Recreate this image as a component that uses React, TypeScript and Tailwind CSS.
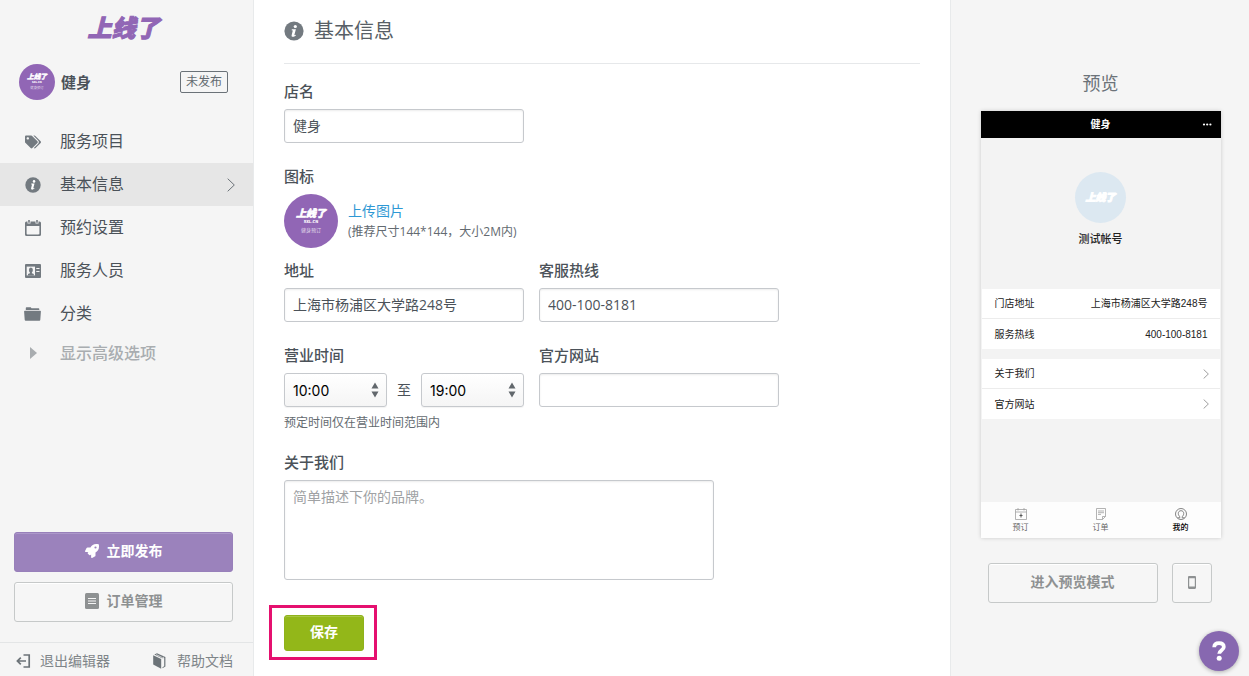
import type { ReactNode } from "react"
import { FaRocket, FaTags } from "react-icons/fa"

const times = ["09:00", "10:00", "11:00", "18:00", "19:00", "20:00"]

const inputClass =
  "h-[34px] w-full rounded-[3px] border border-[#c6c9cd] bg-white px-2 pb-[2px] text-sm text-[#4b5259] shadow-[inset_0_1px_2px_rgba(0,0,0,0.08)] outline-none"

const outlineButtonClass =
  "flex h-10 items-center justify-center rounded-[3px] border border-[#c6c9c9] bg-[#f6f6f6] pb-[2px] text-sm font-bold text-[#8e9192] shadow-[inset_0_1px_0_#fff]"

function InfoIcon({ className }: { className?: string }) {
  return (
    <svg viewBox="0 0 20 20" className={className} aria-hidden="true">
      <circle cx="10" cy="10" r="9.6" fill="currentColor" />
      <circle cx="11.3" cy="5.5" r="1.6" fill="#fff" />
      <path d="M7.9 8.2h4l-1.5 5.6c-.1.5.4.5 1.2 0l.3.6c-1.3 1.2-2.7 1.6-3.6 1.3-.8-.3-.8-1-.6-1.8L8.8 9.5l-1.2-.2z" fill="#fff" />
    </svg>
  )
}

function CalendarIcon() {
  return (
    <svg viewBox="0 0 16 16" className="h-4 w-4" fill="currentColor" aria-hidden="true">
      <path
        fillRule="evenodd"
        d="M1.500 1.500h1V3.500h3V1.500h5v2h3v-2h1A1.500 1.500 0 0 1 16 3v11.500a1.500 1.500 0 0 1-1.500 1.500h-13A1.500 1.500 0 0 1 0 14.500V3a1.500 1.500 0 0 1 1.500-1.500zM1.600 6v7.500c0 .5.400.9.900.9h11c.5 0 .9-.4.9-.9V6z"
      />
      <path d="M3.200 0h1.600v2.800H3.200zM11.200 0h1.600v2.800h-1.600z" />
    </svg>
  )
}

function IdCardIcon() {
  return (
    <svg viewBox="0 0 16 14" className="h-[14px] w-4" aria-hidden="true">
      <rect width="16" height="14" rx="1" fill="currentColor" />
      <rect x="1.700" y="2.600" width="8.300" height="8.800" fill="#f5f5f5" />
      <ellipse cx="5.900" cy="6" rx="2" ry="2.500" fill="currentColor" />
      <path d="M4.900 7.500h2v1.700l1.900.9v1.300H3v-1.300l1.900-.9z" fill="currentColor" />
      <path d="M11.300 4.500h3.200M11.300 7.500h3.200" stroke="#f5f5f5" strokeWidth="1.100" />
    </svg>
  )
}

function FolderIcon() {
  return (
    <svg viewBox="0 0 17 14" className="h-[14px] w-[17px]" fill="currentColor" aria-hidden="true">
      <path d="M1.800 3V1.200C1.800.5 2.200.2 2.800.2h3.400c.7 0 1 .5 1.300 1.100h6.800c.7 0 1 .3 1 1V3z" />
      <path d="M.8 3.800h15.400c.5 0 .8.3.7.8l-.6 8.200c0 .6-.4.9-.9.9H1.700c-.6 0-.9-.3-1-.9L.1 4.600c0-.5.2-.8.7-.8z" />
    </svg>
  )
}

function OrderIcon() {
  return (
    <svg viewBox="0 0 14 16" className="h-4 w-[14px]" aria-hidden="true">
      <rect width="14" height="16" rx="1.500" fill="currentColor" />
      <path d="M3 5.500h8M3 8h8M3 10.500h8" stroke="#f5f5f5" strokeWidth="1.200" />
    </svg>
  )
}

function ExitIcon() {
  return (
    <svg viewBox="0 0 15 14" className="h-[14px] w-[15px] text-[#6c7378]" fill="none" stroke="currentColor" strokeWidth="1.700" aria-hidden="true">
      <path d="M7.500 1h5.700v12H7.500M10 7H1.500M4.800 3.700 1.400 7l3.400 3.300" />
    </svg>
  )
}

function BookIcon() {
  return (
    <svg viewBox="0 0 13 16" className="h-4 w-[13px] text-[#6c7378]" fill="currentColor" aria-hidden="true">
      <path d="M.2 2.200 8.200 6v9.800L.2 11.600z" />
      <path d="M1.300 1.400 4 .2l8.400 3.700v9.700l-2.900 1.600v-1l1.700-.9V4.900L9 5.200z" />
      <path d="M3.200 1.600 9.500 4.700l1.500-.5" fill="none" stroke="#f5f5f5" strokeWidth=".7" />
    </svg>
  )
}

function Chevron({ className }: { className?: string }) {
  return (
    <svg viewBox="0 0 8 14" className={className} fill="none" stroke="currentColor" aria-hidden="true">
      <path d="M.7.7 7.300 7 .7 13.300" />
    </svg>
  )
}

function ShopAvatar({ className }: { className?: string }) {
  return (
    <svg viewBox="0 0 54 54" className={className} role="img" aria-label="健身">
      <circle cx="27" cy="27" r="27" fill="#9166b5" />
      <g fill="#fff" textAnchor="middle" fontFamily="'Noto Sans CJK SC', sans-serif">
        <text x="27" y="23" fontSize="10" fontWeight="900" fontStyle="italic" stroke="#fff" strokeWidth=".6">上线了</text>
        <text x="27" y="29" fontSize="4" fontWeight="900">SXL.CN</text>
        <text x="27" y="38" fontSize="5" opacity=".7">健身预订</text>
      </g>
    </svg>
  )
}

const navItems = [
  { label: "服务项目", icon: <FaTags className="h-4 w-4" /> },
  { label: "基本信息", icon: <InfoIcon className="h-4 w-4" />, active: true },
  { label: "预约设置", icon: <CalendarIcon /> },
  { label: "服务人员", icon: <IdCardIcon /> },
  { label: "分类", icon: <FolderIcon /> },
]

function Sidebar() {
  return (
    <aside className="flex w-[254px] shrink-0 flex-col border-r border-[#e8eaeb] bg-[#f5f5f5]">
      <div className="flex h-14 items-center justify-center pr-[6px] text-2xl font-black text-[#9166b5] italic [-webkit-text-stroke:1px_#9166b5]">
        上线了
      </div>

      <div className="flex items-center pt-2 pr-[25px] pl-[19px]">
        <ShopAvatar className="h-9 w-9" />
        <span className="ml-[6px] text-[15px] font-bold">健身</span>
        <span className="ml-auto rounded-[2px] border border-[#6b7278] px-[5px] text-xs leading-5 text-[#636a70]">未发布</span>
      </div>

      <nav className="mt-5">
        {navItems.map((item) => (
          <a
            key={item.label}
            href="#"
            className={`flex h-[43px] items-center pr-[18px] pl-6 text-base ${item.active ? "bg-[#e6e6e6]" : ""}`}
          >
            <span className="mr-[19px] flex w-[17px] justify-center text-[#737a80]">{item.icon}</span>
            <span className="pb-[2px]">{item.label}</span>
            {item.active && <Chevron className="ml-auto h-[14px] w-2 text-[#6b7278]" />}
          </a>
        ))}
        <a href="#" className="flex h-9 items-center pl-6 text-base font-medium text-[#a9adb0]">
          <span className="flex w-9 pl-[6px]">
            <svg viewBox="0 0 7 12" className="h-3 w-[7px]" fill="currentColor" aria-hidden="true">
              <path d="M0 0l7 6-7 6z" />
            </svg>
          </span>
          显示高级选项
        </a>
      </nav>

      <div className="mt-auto flex flex-col gap-[10px] pr-5 pb-5 pl-[14px]">
        <button className="flex h-10 items-center justify-center gap-2 rounded-[3px] border border-[#9880ba] bg-[#9b82bc] pb-[2px] text-sm font-bold text-white shadow-[inset_0_1px_0_#ad98ca]">
          <FaRocket className="h-[14px] w-[14px]" />
          立即发布
        </button>
        <button className={`${outlineButtonClass} gap-2`}>
          <OrderIcon />
          订单管理
        </button>
      </div>

      <div className="flex justify-between border-t border-[#e3e5e6] pt-2 pr-5 pb-[5px] pl-4 text-sm leading-5 text-[#7f8589]">
        <a href="#" className="flex items-center gap-[9px]">
          <ExitIcon />
          退出编辑器
        </a>
        <a href="#" className="flex items-center gap-[11px]">
          <BookIcon />
          帮助文档
        </a>
      </div>
    </aside>
  )
}

function Field({ id, label, children }: { id: string; label: string; children: ReactNode }) {
  return (
    <div>
      <label htmlFor={id} className="mb-2 block text-[15px] leading-5 font-medium">
        {label}
      </label>
      {children}
    </div>
  )
}

function TimeSelect({ id, label, value }: { id: string; label: string; value: string }) {
  return (
    <div className="relative w-[103px]">
      <select
        id={id}
        aria-label={label}
        defaultValue={value}
        className="h-[34px] w-full appearance-none rounded-[3px] border border-[#c6c9cd] bg-linear-to-b from-white to-[#f5f5f5] px-2 pt-[2px] font-[Inter,sans-serif] text-sm text-black shadow-[0_1px_1px_rgba(0,0,0,0.05)]"
      >
        {times.map((time) => (
          <option key={time}>{time}</option>
        ))}
      </select>
      <svg viewBox="0 0 8 16" className="pointer-events-none absolute top-[9px] right-2 h-4 w-2" fill="#62686d" aria-hidden="true">
        <path d="M4 .5 7.500 6.500H.5zM.5 9.500h7L4 15.500z" />
      </svg>
    </div>
  )
}

function BasicInfo() {
  return (
    <main className="min-w-0 flex-1 bg-white px-[30px] pt-[17px]">
      <h1 className="flex h-[47px] items-start gap-[10px] border-b border-[#e6e8ea] text-xl leading-7 text-[#585f66]">
        <span className="flex h-7 items-center text-[#737a80]">
          <InfoIcon className="h-5 w-5" />
        </span>
        基本信息
      </h1>

      <form className="flex flex-col gap-[23px] pt-[17px]" onSubmit={(e) => e.preventDefault()}>
        <div className="w-[240px]">
          <Field id="name" label="店名">
            <input id="name" className={inputClass} defaultValue="健身" />
          </Field>
        </div>

        <div className="-mb-[11px]">
          <div className="mb-2 text-[15px] leading-5 font-medium">图标</div>
          <div className="flex gap-[10px]">
            <ShopAvatar className="h-[54px] w-[54px]" />
            <div className="pt-[7px]">
              <a href="#" className="block text-sm leading-5 text-[#2e98d4]">上传图片</a>
              <p className="text-xs leading-[22px] text-[#636a70]">(推荐尺寸144*144，大小2M内)</p>
            </div>
          </div>
        </div>

        <div className="grid grid-cols-[240px_240px] gap-x-[15px] gap-y-[23px]">
          <Field id="address" label="地址">
            <input id="address" className={inputClass} defaultValue="上海市杨浦区大学路248号" />
          </Field>
          <Field id="hotline" label="客服热线">
            <input id="hotline" className={inputClass} defaultValue="400-100-8181" />
          </Field>
          <Field id="open" label="营业时间">
            <div className="flex items-center justify-between text-sm">
              <TimeSelect id="open" label="开始时间" value="10:00" />
              至
              <TimeSelect id="close" label="结束时间" value="19:00" />
            </div>
            <p className="mt-[6px] -mb-1 text-xs leading-5 text-[#636a70]">预定时间仅在营业时间范围内</p>
          </Field>
          <Field id="website" label="官方网站">
            <input id="website" className={inputClass} />
          </Field>
        </div>

        <div className="max-w-[430px]">
          <Field id="about" label="关于我们">
            <textarea
              id="about"
              placeholder="简单描述下你的品牌。"
              className="block h-[100px] w-full resize-none rounded-[3px] border border-[#c6c9cd] px-2 py-[6px] text-sm leading-5 shadow-[inset_0_1px_2px_rgba(0,0,0,0.08)] outline-none placeholder:text-[#a0a2a4]"
            />
          </Field>
        </div>

        <div className="mt-[2px] -ml-[15px] w-fit border-3 border-[#e5106f] pt-[7px] pr-[10px] pb-[6px] pl-3">
          <button className="block h-9 w-20 rounded-[3px] border border-[#8fb21b] bg-[#93b719] pb-[2px] text-sm font-bold text-white shadow-[inset_0_1px_0_#a8c644]">
            保存
          </button>
        </div>
      </form>
    </main>
  )
}

function PhoneRow({ label, value }: { label: string; value?: string }) {
  return (
    <div className="flex h-[30px] items-center bg-white pr-[11px] pl-[13px]">
      <span className="mr-auto">{label}</span>
      {value ? <span className="pr-px">{value}</span> : <Chevron className="h-[10px] w-[6px] text-[#777]" />}
    </div>
  )
}

function PhonePreview() {
  return (
    <div className="flex h-[427px] w-[240px] flex-col bg-[#f3f3f3] font-['Liberation_Sans','Noto_Sans_CJK_SC',sans-serif] text-[10px] text-[#222] shadow-[0_0_4px_rgba(0,0,0,0.18)]">
      <div className="grid h-[27px] grid-cols-3 items-center bg-black px-2 text-white">
        <span className="col-start-2 text-center font-bold">健身</span>
        <svg viewBox="0 0 10 3" className="h-[3px] w-[10px] justify-self-end" fill="#fff" aria-hidden="true">
          <circle cx="2" cy="1.500" r="1.100" />
          <circle cx="5.200" cy="1.500" r="1.100" />
          <circle cx="8.400" cy="1.500" r="1.100" />
        </svg>
      </div>

      <div className="flex h-[151px] flex-col items-center pt-[34px]">
        <div className="flex h-[51px] w-[51px] items-center justify-center rounded-full bg-[#dce8f1] text-[10px] font-black text-white italic [-webkit-text-stroke:1px_#fff]">
          上线了
        </div>
        <p className="mt-2 text-[11px] leading-4 font-medium">测试帐号</p>
      </div>

      <div className="divide-y divide-[#ececec] px-px">
        <PhoneRow label="门店地址" value="上海市杨浦区大学路248号" />
        <PhoneRow label="服务热线" value="400-100-8181" />
      </div>
      <div className="mt-[10px] divide-y divide-[#ececec] px-px">
        <PhoneRow label="关于我们" />
        <PhoneRow label="官方网站" />
      </div>

      <div className="mt-auto grid h-9 grid-cols-3 bg-[#fdfdfd] pt-[6px] text-[8px] leading-3 text-[#666]">
        <div className="flex flex-col items-center gap-[2px]">
          <svg viewBox="0 0 12 12" className="h-3 w-3" fill="none" stroke="#a0a0a0" strokeWidth=".8" aria-hidden="true">
            <path d="M.5 1.500h11v10H.5zM.5 4h11M3 0v2.500M9 0v2.500" />
            <path d="M6 5.500v4M4.500 7.500h3" stroke="#555" strokeWidth="1" />
          </svg>
          预订
        </div>
        <div className="flex flex-col items-center gap-[2px]">
          <svg viewBox="0 0 12 12" className="h-3 w-3" fill="none" stroke="#a0a0a0" strokeWidth=".8" aria-hidden="true">
            <path d="M1.500.5h9v8l-3 3h-6zM10.500 8.500h-3v3M3 3h6M3 4.700h6M3 6.400h3" />
          </svg>
          订单
        </div>
        <div className="flex flex-col items-center gap-[2px] font-medium text-black">
          <svg viewBox="0 0 12 12" className="h-3 w-3" fill="none" stroke="#777" strokeWidth=".9" aria-hidden="true">
            <circle cx="6" cy="6" r="5.500" />
            <path d="M2.500 9.800h2.300V8.600C3.600 7.700 3.300 6.500 3.300 5.400 3.300 3.700 4.400 2.700 6 2.700s2.700 1 2.700 2.700c0 1.100-.3 2.300-1.500 3.200v1.200h2.300" />
          </svg>
          我的
        </div>
      </div>
    </div>
  )
}

function PreviewPanel() {
  return (
    <aside className="flex w-[299px] shrink-0 flex-col items-center border-l border-[#e8eaeb] bg-[#f5f5f5] pt-[69px] pl-px">
      <h2 className="mb-[14px] text-lg leading-7 text-[#6c7379]">预览</h2>
      <PhonePreview />
      <div className="mt-[25px] flex gap-[14px] pr-[2px]">
        <button className={`${outlineButtonClass} w-[170px]`}>进入预览模式</button>
        <button aria-label="手机预览" className={`${outlineButtonClass} w-10`}>
          <svg viewBox="0 0 8 13" className="h-[13px] w-2" aria-hidden="true">
            <path
              fill="currentColor"
              fillRule="evenodd"
              d="M1.200 0h5.600C7.500 0 8 .5 8 1.200v10.600c0 .7-.5 1.200-1.200 1.200H1.200C.5 13 0 12.500 0 11.800V1.200C0 .5.500 0 1.200 0zM1.200 2.200v8.400h5.600V2.200z"
            />
          </svg>
        </button>
      </div>
    </aside>
  )
}

export default function App() {
  return (
    <div className="flex min-h-screen font-['Open_Sans','Noto_Sans_CJK_SC',sans-serif] text-[#4b5259]">
      <Sidebar />
      <BasicInfo />
      <PreviewPanel />
      <button
        aria-label="帮助"
        className="fixed right-[10px] bottom-[5px] flex h-10 w-10 items-center justify-center rounded-full bg-[#8768b0] shadow-[0_1px_4px_rgba(0,0,0,0.3)]"
      >
        <svg viewBox="0 0 14 20" className="h-5 w-[14px]" fill="none" aria-hidden="true">
          <path d="M2.200 6.200C2.300 3.500 4.200 2.200 7 2.200s4.800 1.300 4.800 3.800c0 3.200-4.600 3.200-4.600 6.800" stroke="#fff" strokeWidth="3.800" />
          <circle cx="7.200" cy="17.300" r="2.500" fill="#fff" />
        </svg>
      </button>
    </div>
  )
}
